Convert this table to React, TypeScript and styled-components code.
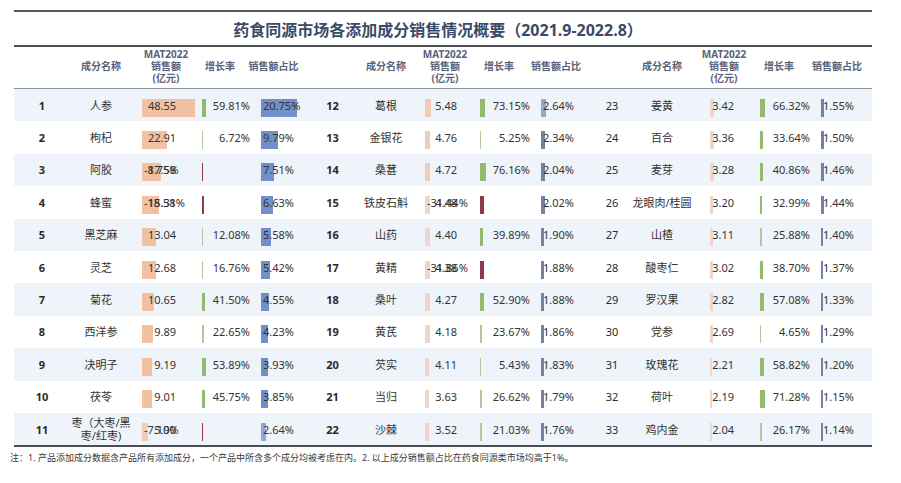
import styled, { createGlobalStyle } from "styled-components";

const GlobalStyle = createGlobalStyle`
  html, body {
    margin: 0;
    padding: 0;
    background: #ffffff;
  }
  body {
    font-family: "Noto Sans", "Noto Sans CJK SC", sans-serif;
    color: #2e2e2e;
  }
`;

interface IItem {
  rank: number;
  name: string;
  sales: number;
  growth: number;
  share: number;
}

interface IGroup {
  rows: IItem[];
  cols: string;
  salesPad: number;
  salesRight: number;
  boldRank: boolean;
}

const g1: IItem[] = [
  { rank: 1, name: "人参", sales: 48.55, growth: 59.81, share: 20.75 },
  { rank: 2, name: "枸杞", sales: 22.91, growth: 6.72, share: 9.79 },
  { rank: 3, name: "阿胶", sales: 17.58, growth: -8.75, share: 7.51 },
  { rank: 4, name: "蜂蜜", sales: 15.31, growth: -18.58, share: 6.63 },
  { rank: 5, name: "黑芝麻", sales: 13.04, growth: 12.08, share: 5.58 },
  { rank: 6, name: "灵芝", sales: 12.68, growth: 16.76, share: 5.42 },
  { rank: 7, name: "菊花", sales: 10.65, growth: 41.5, share: 4.55 },
  { rank: 8, name: "西洋参", sales: 9.89, growth: 22.65, share: 4.23 },
  { rank: 9, name: "决明子", sales: 9.19, growth: 53.89, share: 3.93 },
  { rank: 10, name: "茯苓", sales: 9.01, growth: 45.75, share: 3.85 },
  { rank: 11, name: "枣（大枣/黑\n枣/红枣)", sales: 5.9, growth: -7.1, share: 2.64 },
];

const g2: IItem[] = [
  { rank: 12, name: "葛根", sales: 5.48, growth: 73.15, share: 2.64 },
  { rank: 13, name: "金银花", sales: 4.76, growth: 5.25, share: 2.34 },
  { rank: 14, name: "桑葚", sales: 4.72, growth: 76.16, share: 2.04 },
  { rank: 15, name: "铁皮石斛", sales: 4.48, growth: -31.44, share: 2.02 },
  { rank: 16, name: "山药", sales: 4.4, growth: 39.89, share: 1.9 },
  { rank: 17, name: "黄精", sales: 4.38, growth: -31.86, share: 1.88 },
  { rank: 18, name: "桑叶", sales: 4.27, growth: 52.9, share: 1.88 },
  { rank: 19, name: "黄芪", sales: 4.18, growth: 23.67, share: 1.86 },
  { rank: 20, name: "芡实", sales: 4.11, growth: 5.43, share: 1.83 },
  { rank: 21, name: "当归", sales: 3.63, growth: 26.62, share: 1.79 },
  { rank: 22, name: "沙棘", sales: 3.52, growth: 21.03, share: 1.76 },
];

const g3: IItem[] = [
  { rank: 23, name: "姜黄", sales: 3.42, growth: 66.32, share: 1.55 },
  { rank: 24, name: "百合", sales: 3.36, growth: 33.64, share: 1.5 },
  { rank: 25, name: "麦芽", sales: 3.28, growth: 40.86, share: 1.46 },
  { rank: 26, name: "龙眼肉/桂圆", sales: 3.2, growth: 32.99, share: 1.44 },
  { rank: 27, name: "山楂", sales: 3.11, growth: 25.88, share: 1.4 },
  { rank: 28, name: "酸枣仁", sales: 3.02, growth: 38.7, share: 1.37 },
  { rank: 29, name: "罗汉果", sales: 2.82, growth: 57.08, share: 1.33 },
  { rank: 30, name: "党参", sales: 2.69, growth: 4.65, share: 1.29 },
  { rank: 31, name: "玫瑰花", sales: 2.21, growth: 58.82, share: 1.2 },
  { rank: 32, name: "荷叶", sales: 2.19, growth: 71.28, share: 1.15 },
  { rank: 33, name: "鸡内金", sales: 2.04, growth: 26.17, share: 1.14 },
];

const groups: IGroup[] = [
  { rows: g1, cols: "56px 62px 68px 60px 45px", salesPad: 10, salesRight: 24, boldRank: true },
  { rows: g2, cols: "55px 52px 66px 62px 50px", salesPad: 13, salesRight: 21, boldRank: true },
  { rows: g3, cols: "44px 56px 68px 62px 52px", salesPad: 20, salesRight: 24, boldRank: false },
];

const template = groups.map((g) => g.cols).join(" ");

const salesColor = (v: number) => (v >= 8 ? "#f2c1a1" : v >= 4.5 ? "#f1cdb8" : "#eed6ca");
const growthColor = (w: number) => (w < 0 ? "#8e3a48" : w >= 30 ? "#93bb70" : "#b3c79d");
const shareColor = (v: number) => (v >= 3.5 ? "#7190c7" : v >= 2.5 ? "#92a8d2" : "#74839f");

const fmt = (n: number) => n.toFixed(2);

const App = () => {
  return (
    <Page>
      <GlobalStyle />
      <Sheet>
        <Title>药食同源市场各添加成分销售情况概要（2021.9-2022.8）</Title>
        <Head $cols={template}>
          {groups.map((g, gi) => [
            <HeadCell key={`r${gi}`} $pr={0} />,
            <HeadCell key={`n${gi}`} $pr={0}>成分名称</HeadCell>,
            <HeadCell key={`s${gi}`} $pr={0}>
              MAT2022
              <br />
              销售额
              <br />
              (亿元)
            </HeadCell>,
            <HeadCell key={`g${gi}`} $pr={20}>增长率</HeadCell>,
            <HeadCell key={`p${gi}`} $pr={18}>销售额占比</HeadCell>,
          ])}
        </Head>
        {g1.map((_, i) => (
          <Line key={i} $cols={template} $band={i % 2 === 0}>
            {groups.map((g) => {
              const it = g.rows[i];
              const neg = it.growth < 0;
              const gw = neg
                ? Math.max(1, Math.abs(it.growth) * 0.12)
                : Math.max(1, it.growth * 0.075);
              return [
                <Rank key={`r${it.rank}`} $bold={g.boldRank}>
                  {it.rank}
                </Rank>,
                <Name key={`n${it.rank}`}>
                  {it.name.split("\n").map((l) => (
                    <span key={l}>{l}</span>
                  ))}
                </Name>,
                <BarCell key={`s${it.rank}`}>
                  <Bar
                    $ml={g.salesPad}
                    $color={salesColor(it.sales)}
                    style={{ width: Math.max(2, it.sales * 1.09) }}
                  />
                  {neg && (
                    <Num $side="start" $m={g.salesPad + 2}>
                      {fmt(it.growth)}%
                    </Num>
                  )}
                  <Num $side="end" $m={g.salesRight}>
                    {fmt(it.sales)}
                  </Num>
                </BarCell>,
                <BarCell key={`g${it.rank}`}>
                  <Bar $ml={2} $color={growthColor(neg ? -1 : it.growth)} style={{ width: gw }} />
                  {!neg && (
                    <Num $side="end" $m={10}>
                      {fmt(it.growth)}%
                    </Num>
                  )}
                </BarCell>,
                <BarCell key={`p${it.rank}`}>
                  <Bar
                    $ml={1}
                    $color={shareColor(it.share)}
                    style={{ width: Math.max(2, it.share * 1.75) }}
                  />
                  <Num $side="start" $m={3}>
                    {fmt(it.share)}%
                  </Num>
                </BarCell>,
              ];
            })}
          </Line>
        ))}
        <Rule />
      </Sheet>
      <Note>
        注：1. 产品添加成分数据含产品所有添加成分，一个产品中所含多个成分均被考虑在内。2. 以上成分销售额占比在药食同源类市场均高于1%。
      </Note>
    </Page>
  );
};

const Page = styled.div`
  width: 901px;
  height: 483px;
  padding-top: 10px;
  box-sizing: border-box;
  background: #fff;
`;

const Sheet = styled.div`
  margin-left: 14px;
  width: 858px;
  border-top: 2px solid #555a60;
`;

const Title = styled.div`
  height: 33px;
  display: flex;
  align-items: center;
  justify-content: center;
  padding-right: 10px;
  font-size: 16px;
  font-weight: 700;
  color: #3b4a66;
  border-bottom: 2px solid #4a4d52;
`;

const Head = styled.div<{ $cols: string }>`
  display: grid;
  grid-template-columns: ${(p) => p.$cols};
  height: 41px;
  border-bottom: 1px solid #8c9097;
`;

const HeadCell = styled.div<{ $pr: number }>`
  display: flex;
  align-items: center;
  justify-content: center;
  text-align: center;
  padding-right: ${(p) => p.$pr}px;
  padding-bottom: 4px;
  font-size: 10px;
  line-height: 12px;
  font-weight: 700;
  color: #58627a;
  white-space: nowrap;
`;

const Line = styled.div<{ $cols: string; $band: boolean }>`
  display: grid;
  grid-template-columns: ${(p) => p.$cols};
  height: 32.4px;
  background: ${(p) => (p.$band ? "#eff3fa" : "#ffffff")};
  font-size: 11px;
`;

const Rank = styled.div<{ $bold: boolean }>`
  display: flex;
  align-items: center;
  justify-content: center;
  font-weight: ${(p) => (p.$bold ? 700 : 400)};
  color: #2a2a2a;
`;

const Name = styled.div`
  display: flex;
  flex-direction: column;
  align-items: center;
  justify-content: center;
  line-height: 13px;
  white-space: nowrap;
  color: #333;
`;

const BarCell = styled.div`
  display: grid;
  align-items: center;
  & > * {
    grid-area: 1 / 1;
  }
`;

const Bar = styled.div<{ $ml: number; $color: string }>`
  justify-self: start;
  height: 18px;
  margin-top: 5px;
  margin-left: ${(p) => p.$ml}px;
  background: ${(p) => p.$color};
`;

const Num = styled.span<{ $side: "start" | "end"; $m: number }>`
  justify-self: ${(p) => p.$side};
  ${(p) => (p.$side === "start" ? `margin-left: ${p.$m}px;` : `margin-right: ${p.$m}px;`)}
  white-space: nowrap;
  color: #333;
  position: relative;
`;

const Rule = styled.div`
  border-top: 2px solid #4a4d52;
`;

const Note = styled.div`
  margin: 4px 0 0 10px;
  font-size: 9px;
  line-height: 14px;
  color: #3a3a3a;
  white-space: nowrap;
`;

export default App;
